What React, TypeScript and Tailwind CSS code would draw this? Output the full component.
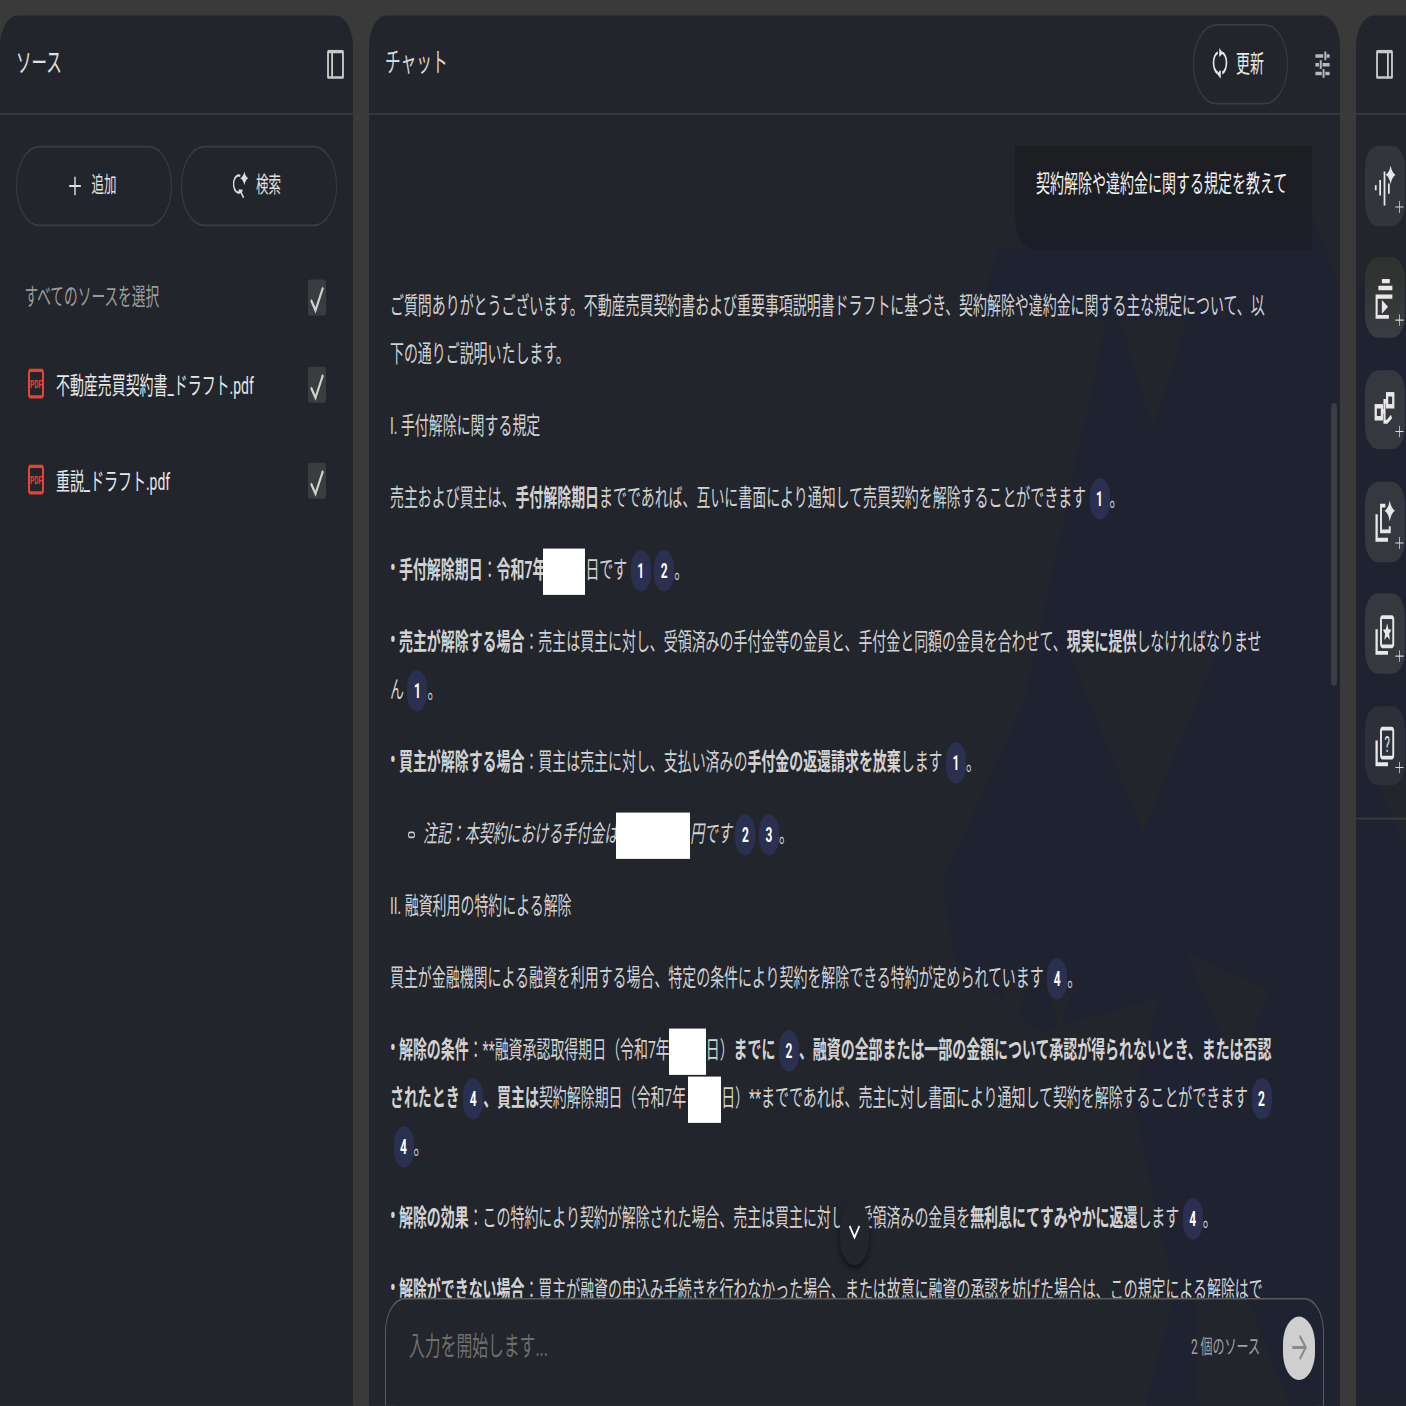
import React from "react";

const Chip = ({ n }: { n: number }) => (
  <span className="inline-flex w-[20px] h-[23.3px] -my-[4px] ml-[3.5px] items-center justify-center rounded-full bg-[#2c3050] text-white text-[12px] font-bold align-middle leading-none">
    {n}
  </span>
);

const Box = ({ w }: { w: string }) => (
  <span className={`inline-block h-[27px] -my-[4px] bg-white align-middle ${w}`} />
);

const Dot = () => <span className="inline-block w-[9px] text-[17px] leading-none">•</span>;

const Stroke = ({ children, className, view = "0 0 24 24", sw = 2 }: { children: React.ReactNode; className?: string; view?: string; sw?: number }) => (
  <svg viewBox={view} preserveAspectRatio="none" fill="none" stroke="currentColor" strokeWidth={sw} className={className}>
    {children}
  </svg>
);

const Spark = ({ x, y, r }: { x: number; y: number; r: number }) => (
  <path
    d={`M${x} ${y - r}Q${x + r * 0.25} ${y - r * 0.25} ${x + r} ${y}Q${x + r * 0.25} ${y + r * 0.25} ${x} ${y + r}Q${x - r * 0.25} ${y + r * 0.25} ${x - r} ${y}Q${x - r * 0.25} ${y - r * 0.25} ${x} ${y - r}Z`}
    fill="currentColor"
    stroke="none"
  />
);

const Check = () => (
  <span className="flex h-[21px] w-[18px] items-center justify-center rounded-[2px] bg-[#3a3c40] text-[#d0d0d0]">
    <svg viewBox="0 0 18 21" className="h-[21px] w-[18px]" fill="none" stroke="currentColor" strokeWidth="2">
      <path d="M3 12 7.5 18 15 4.7" />
    </svg>
  </span>
);

const PdfIcon = () => (
  <svg viewBox="0 0 16 17.5" preserveAspectRatio="none" className="-mt-[2px] h-[17.5px] w-[16px] shrink-0">
    <rect x="1" y="1" width="14" height="15.5" rx="1.5" fill="none" stroke="#ea4335" strokeWidth="2" />
    <text x="8" y="11.2" textAnchor="middle" fontSize="6.5" fontWeight="700" fill="#ea4335" fontFamily="Roboto, sans-serif">PDF</text>
  </svg>
);

const icons: React.ReactNode[] = [
  <>
    <path d="M2 12v3M7 9v9M12 4v20M17 11v6" />
    <Spark x={19} y={6} r={5.5} />
  </>,
  <>
    <path d="M9 2h9M5 6h16" strokeWidth="2.6" />
    <path d="M21 11H3v12h14" strokeWidth="2.4" />
    <path d="M9 13l7 4-7 4Z" fill="currentColor" stroke="none" />
  </>,
  <>
    <rect x="2" y="10" width="7" height="7" strokeWidth="2.6" />
    <rect x="15" y="3" width="7" height="7" strokeWidth="2.6" />
    <path d="M9 13h3V7h3M12 13v6h3l5-3" strokeWidth="2.4" />
  </>,
  <>
    <path d="M3 8v15h13" strokeWidth="2.6" />
    <path d="M13 3H8v15h10v-3" strokeWidth="2.2" />
    <Spark x={18} y={6} r={6} />
  </>,
  <>
    <path d="M3 9v14h13" strokeWidth="2.6" />
    <rect x="8" y="2" width="14" height="17" rx="1.5" strokeWidth="2.2" />
    <path d="m15 5.5 1.5 3.6 3.4.2-2.6 2.4.9 3.6-3.2-2-3.2 2 .9-3.6-2.6-2.4 3.4-.2Z" fill="currentColor" stroke="none" />
  </>,
  <>
    <path d="M3 9v14h13" strokeWidth="2.6" />
    <rect x="8" y="2" width="14" height="17" rx="1.5" strokeWidth="2.2" />
    <text x="15" y="15.5" textAnchor="middle" fontSize="13" fill="currentColor" stroke="none" fontFamily="Roboto, sans-serif">?</text>
  </>,
];

const cardBg = [
  "bg-[#33353d]",
  "bg-gradient-to-b from-[#2e312d] to-[#3a3c42]",
  "bg-[#36383f]",
  "bg-[#36383f]",
  "bg-[#36383f]",
  "bg-[#2d3038]",
];

export default function App() {
  return (
    <div className="h-[1406px] w-[1406px] overflow-hidden bg-[#3a3a3a] font-['Roboto','Noto_Sans_CJK_JP',sans-serif]">
      <div className="flex h-[820.2px] w-[1442px] origin-top-left scale-y-[1.7143] gap-[16px] pt-[8.75px] text-[13.95px] leading-[28px]">
        {/* Sources */}
        <section className="flex h-full w-[353px] shrink-0 flex-col overflow-hidden rounded-t-[18px] bg-[#22252b]">
          <header className="flex h-[58px] shrink-0 items-center justify-between border-b border-[#3a3c3f] pl-[16px] pr-[9px]">
            <h2 className="text-[15.5px] text-[#e0e0e0]">ソース</h2>
            <Stroke className="h-[17.5px] w-[17px] text-[#c8c8c8]" view="2 2 20 20" sw={2.2}>
              <rect x="3.2" y="3.2" width="17.6" height="17.6" rx="1" />
              <path d="M8 3v18" />
            </Stroke>
          </header>
          <div className="flex gap-[9px] pl-[16px] pt-[18.4px]">
            <button className="flex h-[46.7px] w-[156px] items-center justify-center gap-[9px] rounded-[24px] border border-[#3a3c3f] pr-[3px] text-[12.5px] text-[#e0e0e0]">
              <Stroke className="h-[13px] w-[14px]" sw={2.4}><path d="M12 2v20M2 12h20" /></Stroke>
              追加
            </button>
            <button className="flex h-[46.7px] w-[156px] items-center justify-center gap-[7px] rounded-[24px] border border-[#3a3c3f] pr-[4px] text-[12.5px] text-[#e0e0e0]">
              <Stroke className="h-[16px] w-[16px]" sw={2}>
                <path d="M11 4a7.5 7.5 0 1 0 3 12M8.5 17l2-.5L16 23" />
                <Spark x={17} y={6} r={6} />
              </Stroke>
              検索
            </button>
          </div>
          <div className="mt-[31.5px] flex flex-col pr-[27px]">
            <div className="flex h-[21px] items-center justify-between pl-[24.5px]">
              <span className="-mt-[1px] text-[13.7px] text-[#9c9c9c]">すべてのソースを選択</span>
              <Check />
            </div>
            <div className="mt-[30px] flex h-[21px] items-center justify-between pl-[28px]">
              <span className="flex items-center gap-[12px] text-[#e8e8e8]"><PdfIcon />不動産売買契約書_ドラフト.pdf</span>
              <Check />
            </div>
            <div className="mt-[35px] flex h-[21px] items-center justify-between pl-[28px]">
              <span className="flex items-center gap-[12px] text-[#e8e8e8]"><PdfIcon />重説_ドラフト.pdf</span>
              <Check />
            </div>
          </div>
        </section>

        {/* Chat */}
        <section className="relative flex h-full w-[971px] shrink-0 flex-col overflow-hidden rounded-t-[18px] bg-[#22252b]">
          <svg viewBox="369 15 971 1391" preserveAspectRatio="none" className="absolute inset-0 h-full w-full">
            <polygon fill="#1f2231" points="997,250 1312,213 1340,290 1340,1406 1145,1406 1175,1297 1133,1097 1160,997 1040,1030 955,960 943,880 1025,700 1107,320 985,300" />
            <polygon fill="#22252b" points="1120,320 1187,320 1153,430" />
            <polygon fill="#22252b" points="1068,650 1218,650 1143,833" />
            <polygon fill="#22252b" points="1185,950 1270,990 1237,1073" />
            <polygon fill="#22252b" points="1195,1297 1248,1297 1290,1406 1197,1406" />
            <polygon fill="#22252b" points="1000,985 1030,985 1015,1022" />
            <polygon fill="#22252b" points="1045,985 1075,985 1060,1030" />
          </svg>

          <header className="relative flex h-[58px] shrink-0 items-center justify-between border-b border-[#3a3c3f] pl-[16px] pr-[9px]">
            <h2 className="text-[15.7px] text-[#d8d8d8]">チャット</h2>
            <div className="flex items-center gap-[26px]">
              <button className="flex h-[46.7px] w-[95px] items-center justify-center gap-[7px] rounded-[24px] border border-[#3a3c3f] pr-[6px] text-[#e8e8e8]">
                <Stroke className="h-[18px] w-[18px]" sw={2.2}>
                  <path d="M9 3.5a8.5 8.5 0 0 0 0 16M15 3.5a8.5 8.5 0 0 1 0 16" />
                  <path d="M11 0 16 4l-5 3ZM13 24l-5-4 5-3Z" fill="currentColor" stroke="none" />
                </Stroke>
                更新
              </button>
              <Stroke className="h-[17.5px] w-[17px] text-[#b8b8b8]" sw={2.8}>
                <path d="M2 5h11M18 5h4M16 1.5v7M2 12h5M12 12h10M9.5 8.5v7M2 19h9M16 19h6M13.5 15.5v7" />
              </Stroke>
            </div>
          </header>

          <div className="relative min-h-0 flex-1 overflow-hidden pl-[21px] pr-[66px] pt-[18.4px] text-[#d2d2d2]">
            <div className="-mr-[38px] ml-auto h-[60.7px] w-[297px] rounded-bl-[20px] bg-gradient-to-b from-[#1d1e21] to-[#1b1e29] pl-[21px] pt-[8px] text-[14px] text-[#f0f0f0]">
              契約解除や違約金に関する規定を教えて
            </div>
            <div className="mt-[18px] flex flex-col gap-[14px]">
              <p>ご質問ありがとうございます。不動産売買契約書および重要事項説明書ドラフトに基づき、契約解除や違約金に関する主な規定について、以下の通りご説明いたします。</p>
              <p>I. 手付解除に関する規定</p>
              <p>売主および買主は、<b>手付解除期日</b>までであれば、互いに書面により通知して売買契約を解除することができます<Chip n={1} />。</p>
              <p><Dot /><b>手付解除期日</b>：<b>令和7年</b><Box w="w-[42px] -ml-[3px]" />日です<Chip n={1} /><Chip n={2} />。</p>
              <p><Dot /><b>売主が解除する場合</b>：売主は買主に対し、受領済みの手付金等の金員と、手付金と同額の金員を合わせて、<b>現実に提供</b>しなければなりません<Chip n={1} />。</p>
              <p><Dot /><b>買主が解除する場合</b>：買主は売主に対し、支払い済みの<b>手付金の返還請求を放棄</b>します<Chip n={1} />。</p>
              <p><span className="ml-[18px] mr-[8px] inline-block h-[4.7px] w-[7px] rounded-full border border-[#c9c9c9] align-middle" /><i>注記：本契約における手付金は</i><Box w="w-[74px] -ml-[2px]" /><i>円です</i><Chip n={2} /><Chip n={3} />。</p>
              <p>II. 融資利用の特約による解除</p>
              <p>買主が金融機関による融資を利用する場合、特定の条件により契約を解除できる特約が定められています<Chip n={4} />。</p>
              <p><Dot /><b>解除の条件</b>：**融資承認取得期日（令和7年<Box w="w-[37px] -ml-[1px]" />日）<b>までに</b><Chip n={2} /><b>、融資の全部または一部の金額について承認が得られないとき、または否認されたとき</b><Chip n={4} /><b>、買主は</b>契約解除期日（令和7年<Box w="w-[33px] ml-[2px]" />日）**までであれば、売主に対し書面により通知して契約を解除することができます<Chip n={2} /><Chip n={4} />。</p>
              <p><Dot /><b>解除の効果</b>：この特約により契約が解除された場合、売主は買主に対し、受領済みの金員を<b>無利息にてすみやかに返還</b>します<Chip n={4} />。</p>
              <p><Dot /><b>解除ができない場合</b>：買主が融資の申込み手続きを行わなかった場合、または故意に融資の承認を妨げた場合は、この規定による解除はできません。</p>
            </div>
          </div>

          <div className="relative mx-[16px] flex h-[63.6px] shrink-0 items-start justify-between rounded-t-[20px] border border-b-0 border-[#5a5a5a] pl-[23px] pr-[8px] pt-[10.5px]">
            <span className="mt-[3.5px] text-[15.8px] text-[#6e6e6e]">入力を開始します...</span>
            <div className="flex items-center gap-[23px]">
              <span className="-mt-[2px] text-[12px] text-[#a0a0a0]">2 個のソース</span>
              <span className="-mt-[0.5px] flex h-[37.4px] w-[32px] items-center justify-center rounded-full bg-[#cfcfcf] text-[#8a8a8a]">
                <Stroke className="h-[18px] w-[18px]" sw={2.4}><path d="M3 12h18M13 3l8 9-8 9" /></Stroke>
              </span>
            </div>
          </div>

          <div className="absolute right-[3px] top-[226.3px] h-[165px] w-[6px] rounded-full bg-[#3b3d42]" />
          <div className="absolute left-[471px] top-[691px] flex h-[38px] w-[29px] items-center justify-center rounded-full bg-[#22252b] text-white shadow-[0_2px_4px_rgba(0,0,0,0.5)]">
            <Stroke className="h-[9px] w-[13px]" sw={3.2}><path d="m3 3 9 18 9-18" /></Stroke>
          </div>
        </section>

        {/* Studio */}
        <section className="relative flex h-full w-[70px] shrink-0 flex-col overflow-hidden rounded-tl-[18px] bg-[#22252b]">
          <svg viewBox="1356 15 70 1391" preserveAspectRatio="none" className="absolute inset-0 h-full w-full">
            <polygon fill="#1f2231" points="1356,290 1426,290 1426,1406 1356,1406" />
            <polygon fill="#22252b" points="1365,757 1406,757 1406,847" />
          </svg>
          <header className="relative flex h-[58px] shrink-0 items-center border-b border-[#3a3c3f] pl-[19.5px]">
            <Stroke className="h-[17.5px] w-[17px] text-[#c8c8c8]" view="2 2 20 20" sw={2.2}>
              <rect x="3.2" y="3.2" width="17.6" height="17.6" rx="1" />
              <path d="M16 3v18" />
            </Stroke>
          </header>
          <div className="relative flex flex-col gap-[18.67px] pl-[9px] pt-[18.4px]">
            {icons.map((icon, i) => (
              <div key={i} className={`relative flex h-[46.67px] w-[40px] items-center rounded-[13px] pl-[9px] text-[#e8e8e8] ${cardBg[i]}`}>
                <Stroke className="h-[24px] w-[21px]">{icon}</Stroke>
                <span className="absolute bottom-[7px] right-[1px] text-[#d8d8d8]">
                  <Stroke className="block h-[7.5px] w-[9px]" sw={2}><path d="M12 1v22M1 12h22" /></Stroke>
                </span>
              </div>
            ))}
          </div>
          <div className="relative mt-[18.7px] border-t border-[#3a3c3f]" />
        </section>
      </div>
    </div>
  );
}
